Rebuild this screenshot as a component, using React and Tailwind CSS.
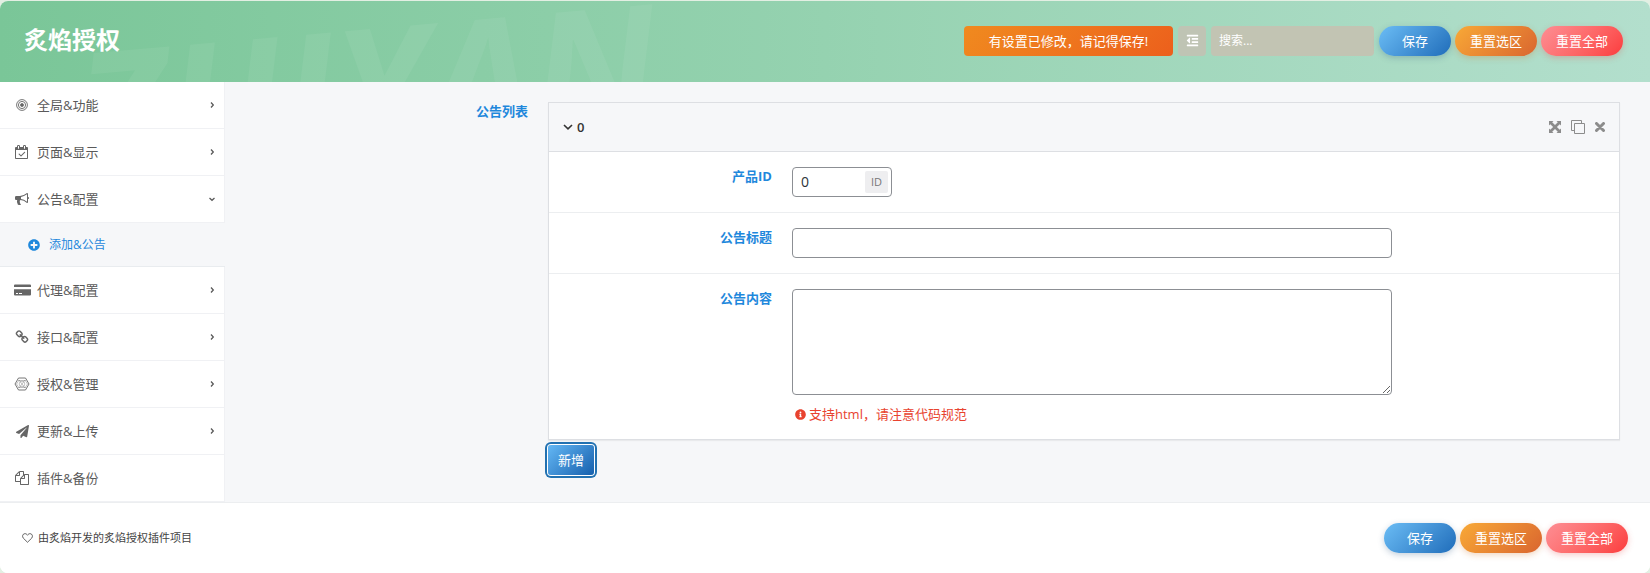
import React from "react";
import { FaOutdent, FaPaperPlane, FaPlusCircle, FaInfoCircle } from "react-icons/fa";

const FA = ({ d }) => (
  <svg viewBox="0 0 1792 1792" className="size-[14px]" fill="currentColor" aria-hidden="true">
    <path d={d} />
  </svg>
);

const BULLHORN =
  "M1664 640q53 0 90.5 37.5t37.5 90.5-37.5 90.5-90.5 37.5v384q0 52-38 90t-90 38q-417-347-812-380-58 19-91 66t-31 100.5 40 92.5q-20 33-23 65.5t6 58 33.5 55 48 50 61.5 50.5q-29 58-111.5 83t-168.5 11.5-132-55.5q-7-23-29.5-87.5t-32-94.5-23-89-15-101 3.5-98.5 22-110.5h-122q-66 0-113-47t-47-113v-192q0-66 47-113t113-47h480q435 0 896-384 52 0 90 38t38 90v384zm-128 604v-954q-394 302-768 343v270q377 42 768 341z";
const FILES =
  "M1696 384q40 0 68 28t28 68v1216q0 40-28 68t-68 28h-960q-40 0-68-28t-28-68v-288h-544q-40 0-68-28t-28-68v-672q0-40 20-88t48-76l408-408q28-28 76-48t88-20h416q40 0 68 28t28 68v328q68-40 128-40h416zm-544 213l-299 299h299v-299zm-640-384l-299 299h299v-299zm196 647l316-316v-416h-384v416q0 40-28 68t-68 28h-416v640h512v-256q0-40 20-88t48-76zm956 804v-1152h-384v416q0 40-28 68t-68 28h-416v640h896z";
const CALENDAR =
  "M1303 964l-512 512q-10 9-23 9t-23-9l-288-288q-9-10-9-23t9-22l46-46q9-9 22-9t23 9l220 220 444-444q10-9 23-9t22 9l46 46q9 9 9 22t-9 23zm-1175 700h1408v-1024h-1408v1024zm384-1216v-288q0-14-9-23t-23-9h-64q-14 0-23 9t-9 23v288q0 14 9 23t23 9h64q14 0 23-9t9-23zm768 0v-288q0-14-9-23t-23-9h-64q-14 0-23 9t-9 23v288q0 14 9 23t23 9h64q14 0 23-9t9-23zm384-64v1280q0 52-38 90t-90 38h-1408q-52 0-90-38t-38-90v-1280q0-52 38-90t90-38h128v-96q0-66 47-113t113-47h64q66 0 113 47t47 113v96h384v-96q0-66 47-113t113-47h64q66 0 113 47t47 113v96h128q52 0 90 38t38 90z";
const LINK =
  "M1520 1216q0-40-28-68l-208-208q-28-28-68-28-42 0-72 32 3 3 19 18.5t21.5 21.5 15 19 13 25.5 3.5 27.5q0 40-28 68t-68 28q-15 0-27.5-3.5t-25.5-13-19-15-21.5-21.5-18.5-19q-33 31-33 73 0 40 28 68l206 207q27 27 68 27 40 0 68-26l147-146q28-28 28-67zm-703-705q0-40-28-68l-206-207q-28-28-68-28-39 0-68 27l-147 146q-28 28-28 67 0 40 28 68l208 208q27 27 68 27 42 0 72-31-3-3-19-18.5t-21.5-21.5-15-19-13-25.5-3.5-27.5q0-40 28-68t68-28q15 0 27.5 3.5t25.5 13 19 15 21.5 21.5 18.5 19q33-31 33-73zm895 705q0 120-85 203l-147 146q-83 83-203 83-121 0-204-85l-206-207q-83-83-83-203 0-123 88-209l-88-88q-86 88-208 88-120 0-204-84l-208-208q-84-84-84-204t85-203l147-146q83-83 203-83 121 0 204 85l206 207q83 83 83 203 0 123-88 209l88 88q86-88 208-88 120 0 204 84l208 208q84 84 84 204z";

const Rings = () => (
  <svg viewBox="0 0 14 14" className="size-[14px]" fill="none" stroke="currentColor" aria-hidden="true">
    <circle cx="7" cy="7" r="5.4" strokeWidth="0.9" />
    <circle cx="7" cy="7" r="3.6" strokeWidth="0.9" />
    <circle cx="7" cy="7" r="1.5" fill="currentColor" strokeWidth="0.8" />
  </svg>
);

const Card = () => (
  <svg viewBox="0 0 17 12" className="h-3 w-[17px]" fill="currentColor" aria-hidden="true">
    <path d="M1 0.500h15a1 1 0 0 1 1 1V3H0V1.500a1 1 0 0 1 1-1zM0 5.300h17V10.500a1 1 0 0 1-1 1H1a1 1 0 0 1-1-1zM2 9v1h2V9zM5 9v1h3V9z" fillRule="evenodd" />
  </svg>
);

const Hexagon = () => (
  <svg viewBox="0 0 16 14" className="h-[14px] w-4" fill="none" stroke="currentColor" strokeWidth="0.4" aria-hidden="true">
    <path d="M4.500 1h7L15 7l-3.500 6h-7L1 7z" strokeWidth="0.9" strokeLinejoin="round" />
    <path d="M5 3l6 8M11 3l-6 8M4.500 3.500h7M4.500 10.500h7M2.500 7l2.500-4M13.500 7L11 3M2.500 7L5 11M13.500 7L11 11" />
    <circle cx="8" cy="7" r="2.800" />
  </svg>
);

const Chevron = ({ down }) => (
  <svg viewBox="0 0 10 10" className="size-[10px]" fill="none" stroke="currentColor" strokeWidth="1.3" aria-hidden="true">
    <path d={down ? "M2.500 4L5 6.300 7.500 4" : "M4 2.500L6.300 5 4 7.500"} />
  </svg>
);

const MENU = [
  { label: "全局&功能", icon: <Rings />, arrow: true },
  { label: "页面&显示", icon: <FA d={CALENDAR} />, arrow: true },
  { label: "公告&配置", icon: <FA d={BULLHORN} />, arrow: true, open: true, child: "添加&公告" },
  { label: "代理&配置", icon: <Card />, arrow: true },
  { label: "接口&配置", icon: <FA d={LINK} />, arrow: true },
  { label: "授权&管理", icon: <Hexagon />, arrow: true },
  { label: "更新&上传", icon: <FaPaperPlane className="size-[13px]" />, arrow: true },
  { label: "插件&备份", icon: <FA d={FILES} /> },
];

function ActionButtons() {
  return (
    <div className="flex shrink-0 gap-1 text-white">
      <button className="h-[30px] w-[72px] rounded-full bg-linear-135 from-[#6bbdf5] to-[#1f6dba] shadow-[0_2px_6px_rgba(60,100,140,0.3)]">保存</button>
      <button className="h-[30px] w-[82px] rounded-full bg-linear-135 from-[#f8a936] to-[#d9652f] shadow-[0_2px_6px_rgba(210,120,50,0.3)]">重置选区</button>
      <button className="h-[30px] w-[82px] rounded-full bg-linear-135 from-[#fd8e94] to-[#fb3a3d] shadow-[0_2px_6px_rgba(230,80,80,0.3)]">重置全部</button>
    </div>
  );
}

function Field({ id, label, last, children }) {
  return (
    <div className={last ? "flex gap-5 p-[15px]" : "flex gap-5 border-b border-[#eceef0] p-[15px]"}>
      <label htmlFor={id} className="w-1/5 shrink-0 text-right leading-[18px] font-bold text-[#1f88dc]">
        {label}
      </label>
      <div className="min-w-0 flex-1">{children}</div>
    </div>
  );
}

export default function App() {
  return (
    <div className="bg-[#e3efe3] pt-px font-['Open_Sans','Noto_Sans_CJK_SC',sans-serif] text-[13px] leading-5 text-[#5a5a5a]">
      <div className="overflow-hidden rounded-lg bg-white">
        <header className="relative flex h-[81px] items-center justify-between overflow-hidden bg-linear-to-r from-[#7ac698] via-[#95d2b0] to-[#b3dfcd] pr-[27px] pb-[2px] pl-6">
          <div
            aria-hidden="true"
            className="absolute top-0 left-[76px] -rotate-5 text-[166px] leading-[166px] font-bold text-white/6 italic select-none"
          >
            ZHIYAN
          </div>
          <h1 className="relative pb-[2px] text-[24px] font-bold text-white">炙焰授权</h1>
          <div className="relative flex items-center gap-[5px]">
            <div className="flex h-[30px] w-[209px] items-center justify-center rounded bg-linear-135 from-[#f08a1f] to-[#ec5f1c] text-white">
              有设置已修改，请记得保存!
            </div>
            <button aria-label="展开全部" className="flex h-[30px] w-7 items-center justify-center rounded bg-[#bfc4b4] text-white">
              <FaOutdent className="size-[13px]" />
            </button>
            <input
              aria-label="搜索"
              placeholder="搜索..."
              className="h-[30px] w-[163px] rounded bg-[#c2c4b3] px-2 text-[12px] text-white outline-none placeholder:text-white"
            />
            <ActionButtons />
          </div>
        </header>

        <div className="flex bg-[#f6f7f9]">
          <nav className="w-[225px] shrink-0">
            <ul>
              {MENU.map((item) => (
                <li key={item.label}>
                  <a href="#" className="flex h-[47px] items-center border-r border-b border-[#f0f1f4] bg-white pr-[7px] pl-3">
                    <span className="flex w-5 justify-center text-[#666]">{item.icon}</span>
                    <span className="ml-[5px] flex-1">{item.label}</span>
                    {item.arrow && <Chevron down={item.open} />}
                  </a>
                  {item.child && (
                    <a href="#" className="flex h-11 items-center gap-[9px] border-b border-[#e9ecef] pl-7 text-[12px] text-[#1f88dc]">
                      <FaPlusCircle className="size-3" />
                      {item.child}
                    </a>
                  )}
                </li>
              ))}
            </ul>
          </nav>

          <main className="flex min-w-0 flex-1 gap-5 px-[30px] pt-5">
            <div className="w-1/5 shrink-0 text-right leading-[18px] font-bold text-[#1f88dc]">公告列表</div>
            <div className="min-w-0 flex-1">
              <section className="border border-[#dddfe3] bg-white shadow-[0_1px_1px_rgba(0,0,0,0.05)]">
                <div className="flex h-[49px] items-center justify-between border-b border-[#dddfe3] bg-[#f6f7f9] px-[14px]">
                  <button className="flex items-center gap-1 font-semibold text-[#333]">
                    <svg viewBox="0 0 10 10" className="size-[10px]" fill="none" stroke="currentColor" strokeWidth="1.600" aria-hidden="true">
                      <path d="M1 3l4 3.800L9 3" />
                    </svg>
                    0
                  </button>
                  <div className="flex items-center gap-[10px] text-[#8c8c8c]">
                    <button aria-label="移动">
                      <svg viewBox="0 0 12 12" className="size-3" fill="currentColor">
                        <path d="M0 0h4.500L3.200 1.300 6 4.100 8.800 1.300 7.500 0H12v4.500L10.700 3.200 7.900 6l2.800 2.800L12 7.500V12H7.500l1.300-1.300L6 7.900l-2.800 2.800L4.500 12H0V7.500l1.300 1.300L4.100 6 1.300 3.200 0 4.500z" />
                      </svg>
                    </button>
                    <button aria-label="复制">
                      <svg viewBox="0 0 14 14" className="size-[14px]" fill="none" stroke="currentColor">
                        <path d="M3.500 10.500h-3v-10h10v3M3.500 3.500h10v10h-10z" />
                      </svg>
                    </button>
                    <button aria-label="删除">
                      <svg viewBox="0 0 10 10" className="size-[10px]" fill="none" stroke="currentColor" strokeWidth="3">
                        <path d="M1.500 1.500l7 7M8.500 1.500l-7 7" strokeLinecap="round" />
                      </svg>
                    </button>
                  </div>
                </div>
                <Field id="pid" label="产品ID">
                  <div className="flex h-[30px] w-[100px] items-center rounded border border-[#8c8f94] bg-white pr-[3px] pl-2">
                    <input id="pid" defaultValue="0" className="w-0 min-w-0 flex-1 text-[14px] text-[#2c3338] outline-none" />
                    <span className="flex h-[22px] w-[23px] items-center justify-center rounded-xs bg-[#eeeef0] text-[11px] text-[#777]">ID</span>
                  </div>
                </Field>
                <Field id="title" label="公告标题">
                  <input id="title" className="block h-[30px] w-full max-w-[600px] rounded border border-[#8c8f94] bg-white px-2" />
                </Field>
                <Field id="content" label="公告内容" last>
                  <textarea id="content" className="block h-[106px] w-full max-w-[600px] resize rounded border border-[#8c8f94] bg-white px-2 py-1" />
                  <p className="mt-[9px] flex items-center gap-[3px] pl-[3px] text-[#e8432f]">
                    <FaInfoCircle className="size-[11px]" />
                    支持html，请注意代码规范
                  </p>
                </Field>
              </section>
              <button className="mt-[5px] block h-[30px] w-[46px] rounded-[3px] bg-linear-135 from-[#64b8f5] to-[#1560ad] text-white shadow-[0_0_0_1px_#fff,0_0_0_3px_#2271b1]">
                新增
              </button>
            </div>
          </main>
        </div>

        <footer className="flex h-[71px] items-center justify-between border-t border-[#eceef0] bg-white px-[22px]">
          <p className="flex items-center gap-[5px] text-[11px] text-[#444]">
            <svg viewBox="0 0 12 11" className="h-[10px] w-[11px]" fill="none" stroke="currentColor" aria-hidden="true">
              <path d="M6 10.200L1.400 5.700C-0.200 4 0.600 0.800 3.100 0.700 4.500 0.700 5.400 1.500 6 2.500 6.600 1.500 7.500 0.700 8.900 0.700c2.500 0.100 3.300 3.300 1.700 5z" strokeWidth="0.9" strokeLinejoin="round" />
            </svg>
            由炙焰开发的炙焰授权插件项目
          </p>
          <ActionButtons />
        </footer>
      </div>
    </div>
  );
}
